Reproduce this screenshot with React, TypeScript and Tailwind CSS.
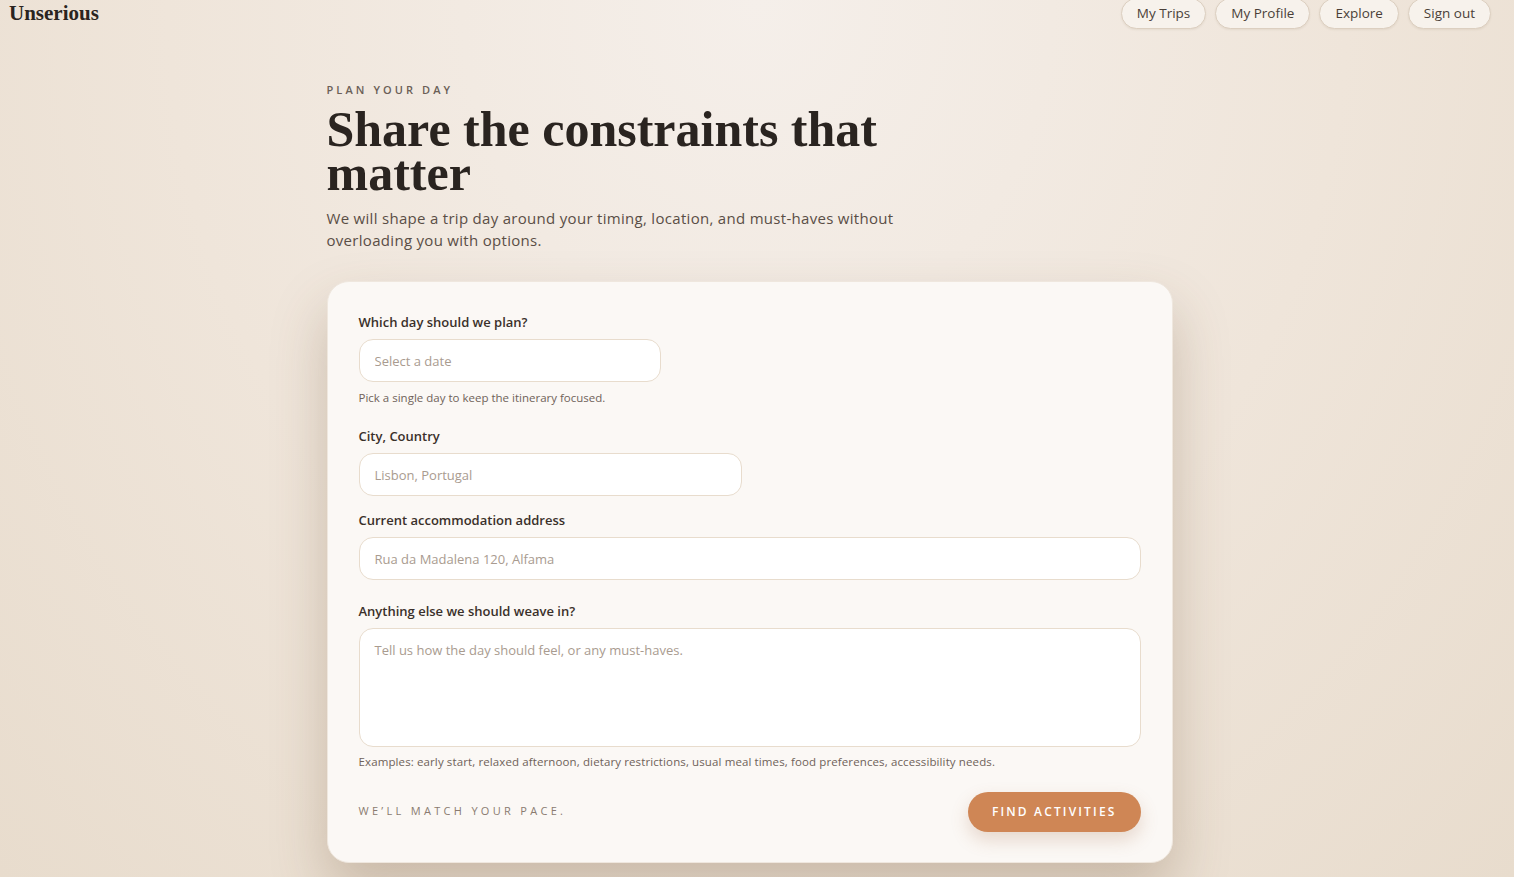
import React from 'react';

const sans = { fontFamily: '"Open Sans", Inter, sans-serif' };

const Field = ({ label, children }: { label: string; children: React.ReactNode }) => (
  <div className="flex flex-col">
    <label className="text-[13px] font-semibold text-[#3a302a] mb-[8px] leading-[18px]">{label}</label>
    {children}
  </div>
);

const inputCls =
  'h-[43px] rounded-[14px] border border-[#e8dccd] bg-white px-[15px] text-[13px] text-[#3a302a] placeholder:text-[#a99b8f] outline-none';

export default function App() {
  return (
    <div
      className="min-h-[877px] w-full bg-[radial-gradient(ellipse_at_50%_0%,#f5efea_0%,#efe5da_55%,#e8dccd_100%)] text-[#2a2420]"
      style={sans}
    >
      {/* Top bar */}
      <header className="flex items-start justify-between pl-[9px] pr-[23px]">
        <div className="-mt-[2px] text-[21px] font-bold text-[#2a2420]" style={{ fontFamily: '"Liberation Serif", serif' }}>
          Unserious
        </div>
        <nav className="flex gap-[9px] -mt-[2px]">
          {['My Trips', 'My Profile', 'Explore', 'Sign out'].map((t) => (
            <button
              key={t}
              className="h-[31px] rounded-full border border-[#dccfc0] bg-[#f7f2ec] px-[15px] text-[13.5px] text-[#4a3f38] shadow-[0_1px_2px_rgba(90,60,30,0.08)]"
            >
              {t}
            </button>
          ))}
        </nav>
      </header>

      <div className="pr-[15px]">
        <main className="mx-auto w-[846px] pt-[52px]">
          <p className="text-[11px] font-semibold tracking-[0.28em] text-[#6b5f57]">PLAN YOUR DAY</p>
          <h1
            className="mt-[9px] text-[50px] font-bold leading-[44px] text-[#2a2420] w-[620px]"
            style={{ fontFamily: '"Liberation Serif", serif' }}
          >
            Share the constraints that matter
          </h1>
          <p className="mt-[12px] w-[590px] text-[15px] leading-[22px] tracking-[0.02em] text-[#5a4e46]">
            We will shape a trip day around your timing, location, and must-haves without overloading you with options.
          </p>

          <form className="mt-[30px] rounded-[22px] border border-[#efe7de] bg-[#fbf8f5] px-[31px] pt-[31px] pb-[30px] shadow-[0_28px_55px_rgba(100,70,40,0.26)]">
            <Field label="Which day should we plan?">
              <input className={`${inputCls} w-[302px]`} placeholder="Select a date" />
              <p className="mt-[7px] text-[11.5px] text-[#6f6259]">Pick a single day to keep the itinerary focused.</p>
            </Field>
            <div className="mt-[21px]">
              <Field label="City, Country">
                <input className={`${inputCls} w-[383px]`} placeholder="Lisbon, Portugal" />
              </Field>
            </div>
            <div className="mt-[15px]">
              <Field label="Current accommodation address">
                <input className={`${inputCls} w-full`} placeholder="Rua da Madalena 120, Alfama" />
              </Field>
            </div>
            <div className="mt-[22px]">
              <Field label="Anything else we should weave in?">
                <textarea
                  className="h-[119px] w-full resize-none rounded-[14px] border border-[#e8dccd] bg-white px-[15px] py-[12px] text-[13px] text-[#3a302a] placeholder:text-[#a99b8f] outline-none"
                  placeholder="Tell us how the day should feel, or any must-haves."
                />
                <p className="mt-[6px] text-[11.5px] tracking-[0.01em] text-[#6f6259]">
                  Examples: early start, relaxed afternoon, dietary restrictions, usual meal times, food preferences, accessibility needs.
                </p>
              </Field>
            </div>
            <div className="mt-[21px] flex items-center justify-between">
              <span className="text-[11px] tracking-[0.3em] text-[#8a7b70]">WE&rsquo;LL MATCH YOUR PACE.</span>
              <button
                type="button"
                className="h-[40px] rounded-full bg-[#cf8655] px-[24px] text-[12px] font-semibold tracking-[0.18em] text-white shadow-[0_8px_18px_rgba(160,100,60,0.22)]"
              >
                FIND ACTIVITIES
              </button>
            </div>
          </form>
        </main>
      </div>
    </div>
  );
}
